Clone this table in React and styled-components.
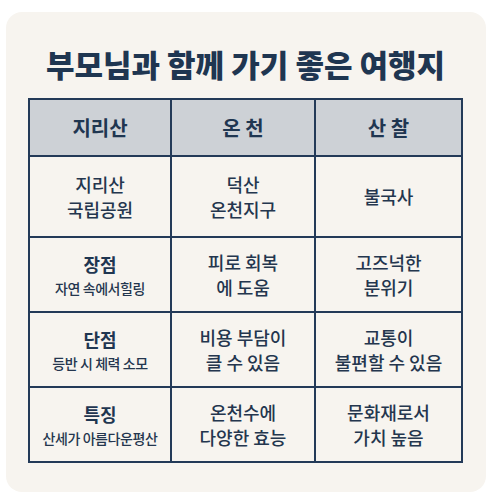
import styled, { createGlobalStyle } from "styled-components"

const Global = createGlobalStyle`
    html, body {
        margin: 0;
        padding: 0;
        background: #ffffff;
    }
    body {
        font-family: "Noto Sans CJK KR", "Noto Sans", sans-serif;
    }
`

const Pagina = styled.div`
    padding: 12px 9px 11px 6px;
`

const Cartao = styled.div`
    height: 480px;
    box-sizing: border-box;
    background: #f7f4ef;
    border-radius: 16px;
    padding: 32px 23px 0 22px;
`

const Titulo = styled.h1`
    margin: 0 0 14px;
    text-align: center;
    font-size: 31px;
    line-height: 40px;
    font-weight: 900;
    color: #1f3651;
`

const Tabela = styled.table`
    width: 100%;
    border-collapse: collapse;
    table-layout: fixed;
    color: #24364e;
`

const Cabecalho = styled.th`
    background: #cdd1d6;
    border: 2px solid #233a58;
    height: 55px;
    font-size: 20px;
    font-weight: 700;
    color: #1f3651;
    padding: 0;
    width: ${(p) => p.$largura || "auto"};
`

const Celula = styled.td`
    border: 2px solid #233a58;
    height: ${(p) => p.$altura}px;
    text-align: center;
    vertical-align: middle;
    padding: 0;
    font-size: 18px;
    line-height: 25px;
    font-weight: 500;
`

const Rotulo = styled.div`
    font-size: 18px;
    font-weight: 700;
    line-height: 26px;
    color: #1f3651;
`

const Sub = styled.div`
    font-size: 14px;
    line-height: 22px;
    font-weight: 500;
    letter-spacing: -0.4px;
`

const Linhas = ({ texto }) =>
    texto.split("\n").map((t, i) => <div key={i}>{t}</div>)

const dados = [
    { altura: 79, a: "지리산\n국립공원", b: "덕산\n온천지구", c: "불국사" },
    { altura: 73, rotulo: "장점", sub: "자연 속에서힐링", b: "피로 회복\n에 도움", c: "고즈넉한\n분위기" },
    { altura: 73, rotulo: "단점", sub: "등반 시 체력 소모", b: "비용 부담이\n클 수 있음", c: "교통이\n불편할 수 있음" },
    { altura: 73, rotulo: "특징", sub: "산세가 아름다운평산", b: "온천수에\n다양한 효능", c: "문화재로서\n가치 높음" },
]

export default function App() {
    return (
        <Pagina>
            <Global />
            <Cartao>
                <Titulo>부모님과 함께 가기 좋은 여행지</Titulo>
                <Tabela>
                    <thead>
                        <tr>
                            <Cabecalho $largura="140px">지리산</Cabecalho>
                            <Cabecalho $largura="142px">온 천</Cabecalho>
                            <Cabecalho>산 찰</Cabecalho>
                        </tr>
                    </thead>
                    <tbody>
                        {dados.map((d, i) => (
                            <tr key={i}>
                                <Celula $altura={d.altura}>
                                    {d.rotulo ? (
                                        <>
                                            <Rotulo>{d.rotulo}</Rotulo>
                                            <Sub>{d.sub}</Sub>
                                        </>
                                    ) : (
                                        <Linhas texto={d.a} />
                                    )}
                                </Celula>
                                <Celula $altura={d.altura}>
                                    <Linhas texto={d.b} />
                                </Celula>
                                <Celula $altura={d.altura}>
                                    <Linhas texto={d.c} />
                                </Celula>
                            </tr>
                        ))}
                    </tbody>
                </Tabela>
            </Cartao>
        </Pagina>
    )
}
